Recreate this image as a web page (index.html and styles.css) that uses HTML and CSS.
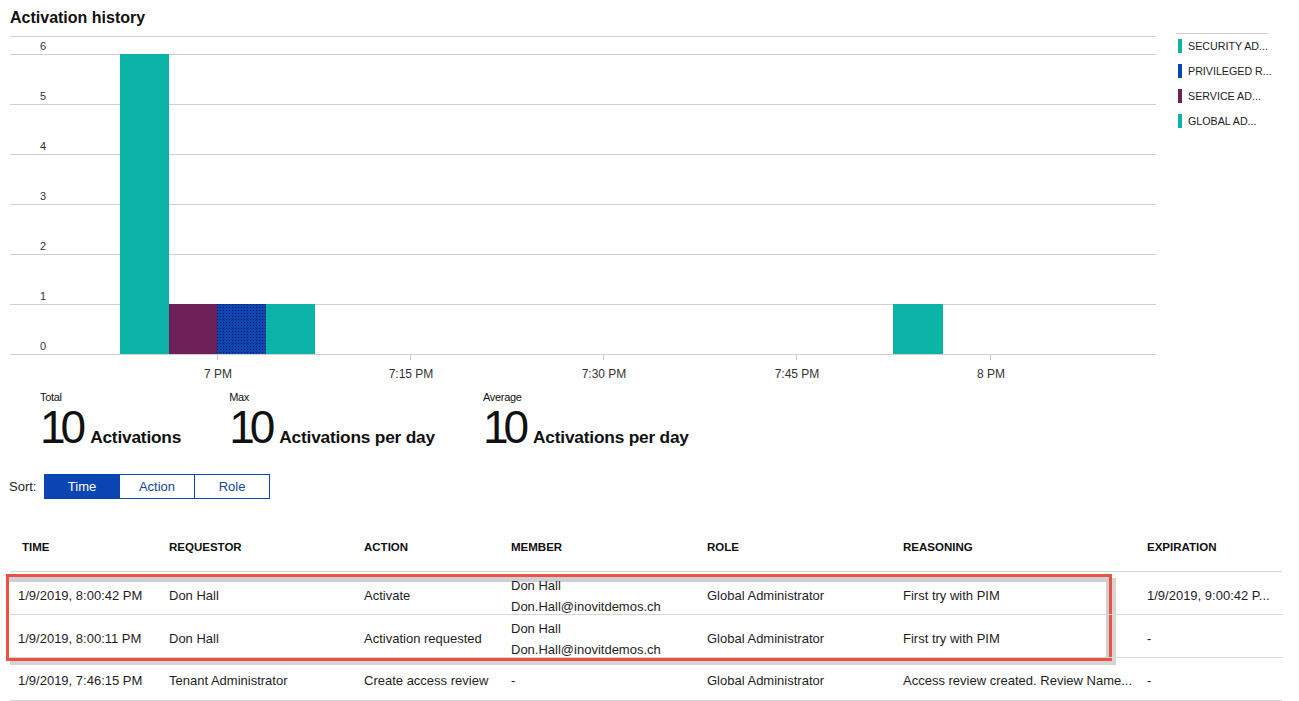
FILE: index.html
```html
<!DOCTYPE html>
<html>
<head>
<meta charset="utf-8">
<link rel="stylesheet" href="styles.css">
</head>
<body>
<div class="chart-area">
  <div class="chart-main">
    <div class="title">Activation history</div>
    <svg class="chart" width="1160" height="350" viewBox="0 0 1160 350">
      <defs>
        <pattern id="dots" width="3" height="3" patternUnits="userSpaceOnUse">
          <rect width="3" height="3" fill="#0b45b1"/>
          <rect x="1" y="1" width="1" height="1" fill="#0a1a4a"/>
        </pattern>
      </defs>
      <g stroke="#cfcfcf" stroke-width="1">
        <line x1="10" y1="0.5" x2="1156" y2="0.5"/>
        <line x1="10" y1="18.5" x2="1156" y2="18.5"/>
        <line x1="10" y1="68.5" x2="1156" y2="68.5"/>
        <line x1="10" y1="118.5" x2="1156" y2="118.5"/>
        <line x1="10" y1="168.5" x2="1156" y2="168.5"/>
        <line x1="10" y1="218.5" x2="1156" y2="218.5"/>
        <line x1="10" y1="268.5" x2="1156" y2="268.5"/>
        <line x1="10" y1="318.5" x2="1156" y2="318.5"/>
      </g>
      <g class="ylab">
        <text x="40" y="14">6</text>
        <text x="40" y="64">5</text>
        <text x="40" y="114">4</text>
        <text x="40" y="164">3</text>
        <text x="40" y="214">2</text>
        <text x="40" y="264">1</text>
        <text x="40" y="314">0</text>
      </g>
      <rect x="120" y="18" width="49" height="300" fill="#0cb3a7"/>
      <rect x="169" y="268" width="48" height="50" fill="#6d2158"/>
      <rect x="217" y="268" width="49" height="50" fill="url(#dots)"/>
      <rect x="266" y="268" width="49" height="50" fill="#0cb3a7"/>
      <rect x="893" y="268" width="50" height="50" fill="#0cb3a7"/>
      <g stroke="#c8c8c8" stroke-width="1">
        <line x1="217.5" y1="319" x2="217.5" y2="324"/>
        <line x1="410.5" y1="319" x2="410.5" y2="324"/>
        <line x1="603.5" y1="319" x2="603.5" y2="324"/>
        <line x1="796.5" y1="319" x2="796.5" y2="324"/>
        <line x1="990.5" y1="319" x2="990.5" y2="324"/>
      </g>
      <g class="xlab">
        <text x="218" y="342">7 PM</text>
        <text x="411" y="342">7:15 PM</text>
        <text x="604" y="342">7:30 PM</text>
        <text x="797" y="342">7:45 PM</text>
        <text x="991" y="342">8 PM</text>
      </g>
    </svg>
  </div>
  <div class="legend">
    <div class="legend-item"><span class="swatch teal"></span>SECURITY AD...</div>
    <div class="legend-item"><span class="swatch blue"></span>PRIVILEGED R...</div>
    <div class="legend-item"><span class="swatch purple"></span>SERVICE AD...</div>
    <div class="legend-item"><span class="swatch teal"></span>GLOBAL AD...</div>
  </div>
</div>

<div class="stats">
  <div class="stat">
    <div class="stat-label">Total</div>
    <div class="stat-value"><span class="num">10</span><span class="unit">Activations</span></div>
  </div>
  <div class="stat">
    <div class="stat-label">Max</div>
    <div class="stat-value"><span class="num">10</span><span class="unit">Activations per day</span></div>
  </div>
  <div class="stat">
    <div class="stat-label">Average</div>
    <div class="stat-value"><span class="num">10</span><span class="unit">Activations per day</span></div>
  </div>
</div>

<div class="sort">
  <span class="sort-label">Sort:</span>
  <div class="seg">
    <span class="seg-btn active">Time</span>
    <span class="seg-btn">Action</span>
    <span class="seg-btn">Role</span>
  </div>
</div>

<div class="table">
  <div class="row head">
    <div class="cell first">TIME</div>
    <div class="cell">REQUESTOR</div>
    <div class="cell">ACTION</div>
    <div class="cell">MEMBER</div>
    <div class="cell">ROLE</div>
    <div class="cell">REASONING</div>
    <div class="cell">EXPIRATION</div>
  </div>
  <div class="row">
    <div class="cell">1/9/2019, 8:00:42 PM</div>
    <div class="cell">Don Hall</div>
    <div class="cell">Activate</div>
    <div class="cell member"><div>Don Hall</div><div>Don.Hall@inovitdemos.ch</div></div>
    <div class="cell">Global Administrator</div>
    <div class="cell">First try with PIM</div>
    <div class="cell">1/9/2019, 9:00:42 P...</div>
  </div>
  <div class="row">
    <div class="cell">1/9/2019, 8:00:11 PM</div>
    <div class="cell">Don Hall</div>
    <div class="cell">Activation requested</div>
    <div class="cell member"><div>Don Hall</div><div>Don.Hall@inovitdemos.ch</div></div>
    <div class="cell">Global Administrator</div>
    <div class="cell">First try with PIM</div>
    <div class="cell">-</div>
  </div>
  <div class="row">
    <div class="cell">1/9/2019, 7:46:15 PM</div>
    <div class="cell">Tenant Administrator</div>
    <div class="cell">Create access review</div>
    <div class="cell">-</div>
    <div class="cell">Global Administrator</div>
    <div class="cell">Access review created. Review Name...</div>
    <div class="cell">-</div>
  </div>
  <div class="highlight"></div>
</div>
</body>
</html>
```

FILE: styles.css
```css
html, body {
  margin: 0;
  padding: 0;
  background: #ffffff;
}
body {
  font-family: "Segoe UI", "Liberation Sans", Arial, sans-serif;
  color: #1e1e1e;
  font-size: 13px;
  width: 1299px;
  height: 701px;
  overflow: hidden;
}
.chart-area {
  display: flex;
}
.chart-main {
  display: flex;
  flex-direction: column;
  width: 1160px;
}
.title {
  height: 36px;
  line-height: 36px;
  padding-left: 10px;
  font-size: 16px;
  font-weight: bold;
  color: #111;
}
.chart {
  display: block;
}
.ylab text {
  font-size: 11px;
  fill: #333;
  text-anchor: start;
}
.xlab text {
  font-size: 12px;
  fill: #333;
  text-anchor: middle;
}
.legend {
  margin-left: 16px;
  margin-top: 33px;
  width: 92px;
  border-top: 1px solid #d0d0d0;
  padding-top: 5px;
  display: flex;
  flex-direction: column;
  gap: 11px;
}
.legend-item {
  display: flex;
  align-items: center;
  height: 14px;
  padding-left: 2px;
  font-size: 10.7px;
  color: #222;
  white-space: nowrap;
}
.swatch {
  width: 4px;
  height: 14px;
  margin-right: 6px;
  flex: none;
}
.swatch.teal { background: #0cb3a7; }
.swatch.blue { background: #0b45b1; }
.swatch.purple { background: #6d2158; }

.stats {
  display: flex;
  gap: 48px;
  padding-left: 40px;
  margin-top: 4px;
}
.stat-label {
  font-size: 11px;
  line-height: 14px;
  color: #111;
  letter-spacing: -0.3px;
}
.stat-value {
  display: flex;
  align-items: baseline;
  height: 46px;
}
.num {
  font-size: 46px;
  line-height: 46px;
  color: #111;
  letter-spacing: -5px;
  margin-right: 9px;
}
.unit {
  font-size: 17.3px;
  font-weight: bold;
  color: #111;
  letter-spacing: -0.2px;
}

.sort {
  display: flex;
  align-items: center;
  margin-top: 24px;
  padding-left: 9px;
}
.sort-label {
  font-size: 13px;
  width: 35px;
}
.seg {
  display: flex;
  border: 1px solid #0b45b1;
}
.seg-btn {
  width: 74px;
  height: 23px;
  line-height: 23px;
  text-align: center;
  font-size: 13px;
  color: #1546a0;
  background: #fff;
  border-left: 1px solid #0b45b1;
}
.seg-btn:first-child {
  border-left: none;
  width: 74px;
}
.seg-btn.active {
  background: #0b45b1;
  color: #fff;
}

.table {
  position: relative;
  margin-top: 24px;
  margin-left: 10px;
  width: 1272px;
}
.row {
  position: relative;
  z-index: 1;
  display: grid;
  grid-template-columns: 151px 195px 147px 196px 196px 244px 143px;
  height: 40px;
  border-bottom: 1px solid #d6d6d6;
  align-items: center;
  padding-top: 2px;
  box-sizing: content-box;
}
.row.head {
  height: 48px;
  font-weight: bold;
  font-size: 11.5px;
  color: #111;
  padding-top: 0;
}
.cell {
  padding-left: 8px;
  white-space: nowrap;
  overflow: hidden;
}
.row.head .cell.first {
  padding-left: 12px;
}
.cell.member {
  line-height: 21px;
  overflow: visible;
  margin-top: 1px;
}
.highlight {
  position: absolute;
  z-index: 0;
  left: -4px;
  top: 51px;
  width: 1100px;
  height: 81px;
  border: 3px solid #ea533f;
  box-shadow: inset 0 5px 0 #cdcfd2, inset -3px 0 0 #cdcfd2, 4px 4px 0 #d5d5d5;
  pointer-events: none;
}
```
